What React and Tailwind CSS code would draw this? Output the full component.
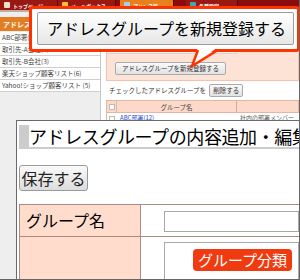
const jp = { fontFamily: '"Noto Sans CJK JP", "Noto Sans", sans-serif' };

const NavTab = ({ label, icon, active }) => (
  <div
    className={`flex items-center gap-[3px] h-[10px] px-[4px] border-r border-[#5a0606] ${
      active ? 'bg-[#e9801e]' : 'bg-[#9a1812]'
    }`}
  >
    <span className={`w-[6px] h-[6px] rounded-[1px] ${icon}`} />
    <span className="text-[5px] leading-none text-white font-bold whitespace-nowrap">{label}</span>
  </div>
);

const SideItem = ({ children }) => (
  <div className="h-[12px] bg-white border-b border-[#cfcfcf] pl-[2px] text-[6.5px] leading-[11px] text-[#444] whitespace-nowrap overflow-hidden">
    {children}
  </div>
);

const SmallBtn = ({ children, className = '' }) => (
  <div
    className={`flex items-center justify-center h-[13px] px-[3px] border border-[#aaa] rounded-[2px] bg-gradient-to-b from-[#fafafa] to-[#e2e2e2] text-[6.5px] text-[#333] whitespace-nowrap ${className}`}
  >
    {children}
  </div>
);

export default function App() {
  return (
    <div
      className="relative w-[300px] h-[280px] overflow-hidden bg-white border-r border-b border-[#666]"
      style={jp}
    >
      {/* background page */}
      <div className="flex h-[10px] bg-[#8b0c0c]">
        <div className="w-[58px]"><NavTab label="トップページ" icon="bg-[#f1e0c8]" /></div>
        <div className="w-[58px]"><NavTab label="メールボックス" icon="bg-[#f5c638]" /></div>
        <div className="w-[54px] ml-[4px]"><NavTab label="アドレス帳" icon="bg-[#9fd0ee]" active /></div>
        <div className="w-[52px] ml-[12px]"><NavTab label="各種設定" icon="bg-[#3aa9b5]" /></div>
      </div>
      <div className="h-[2px] bg-[#c9a6a0]" />

      <div className="flex h-[268px]">
        <div className="w-[101px] pt-[5px] bg-[#eeeeee] border-r border-[#c8c8c8]">
          <div className="h-[14px] bg-[#e47d22] pl-[3px] text-[7px] leading-[14px] font-bold text-white">
            アドレスグループ
          </div>
          <div className="h-[1px]" />
          <SideItem>ABC部署(12)</SideItem>
          <SideItem>取引先-A会社(8)</SideItem>
          <SideItem>取引先-B会社(3)</SideItem>
          <SideItem>楽天ショップ顧客リスト(6)</SideItem>
          <SideItem>Yahoo!ショップ顧客リスト (5)</SideItem>
        </div>

        <div className="flex-1 ml-[5px] pt-[5px]">
          <div className="h-[64px] bg-[#fde3d5] border border-[#f1c3ae]">
            <div className="flex h-[36px]">
              <div className="w-[130px] h-[36px] bg-[#f0f0f0] border-r border-b border-[#d6d6d6] flex items-end justify-center pb-[2px]">
                <span className="text-[6px] text-[#2a4fc8] underline">アドレス帳一覧</span>
              </div>
              <div className="flex-1 flex items-end justify-end pr-[8px] pb-[2px]">
                <span className="text-[6px] text-[#2a4fc8] underline">グループ一覧</span>
              </div>
            </div>
            <div className="pl-[8px] pt-[8px]">
              <SmallBtn className="w-[111px]">アドレスグループを新規登録する</SmallBtn>
            </div>
          </div>

          <div className="flex items-center gap-[3px] h-[19px] pl-[3px]">
            <span className="text-[6.5px] text-[#333]">チェックしたアドレスグループを</span>
            <SmallBtn>削除する</SmallBtn>
          </div>

          <div className="flex h-[13px] bg-[#fcd9c8] border border-[#e3b6a3]">
            <div className="w-[10px] flex items-center justify-center border-r border-[#e3b6a3]">
              <span className="w-[6px] h-[6px] bg-white border border-[#bbb]" />
            </div>
            <div className="w-[120px] border-r border-[#d6a99a] text-center text-[6.5px] leading-[12px] text-[#444]">
              グループ名
            </div>
          </div>
          <div className="flex h-[12px] border-l border-[#e3b6a3]">
            <div className="w-[10px] flex items-center justify-center">
              <span className="w-[6px] h-[6px] bg-white border border-[#bbb]" />
            </div>
            <div className="w-[120px] pl-[3px] text-[6px] leading-[10px] text-[#2a4fc8]">ABC部署(12)</div>
            <div className="pl-[3px] text-[6px] leading-[10px] text-[#555]">社内の部署メンバー</div>
          </div>
        </div>
      </div>

      {/* front panel */}
      <div className="absolute left-[16px] top-[120px] right-0 bottom-0 bg-white border-l border-t border-[#6a6a6a] pl-[2px] pt-[4px]">
        <div className="h-[24px] border-l-[10px] border-b-[2px] border-[#cccccc] bg-white overflow-hidden whitespace-nowrap">
          <span className="text-[18px] leading-[22px] text-black tracking-[-0.4px]">
            アドレスグループの内容追加・編集
          </span>
        </div>

        <div className="mt-[16px] flex items-center justify-center w-[69px] h-[26px] border border-[#9a9a9a] rounded-[3px] bg-gradient-to-b from-[#fbfbfb] to-[#dcdcdc] text-[16px] text-[#222]">
          保存する
        </div>

        <div className="mt-[13px] grid grid-cols-[121px_1fr] border-t border-l border-[#b08a82]">
          <div className="h-[32px] bg-[#ffdccc] border-r border-b border-[#b08a82] pl-[6px] text-[16px] leading-[31px] text-black">
            グループ名
          </div>
          <div className="h-[32px] border-b border-[#b08a82] pl-[23px] pt-[6px]">
            <div className="h-[21px] border border-[#a8a8a8]" />
          </div>
          <div className="h-[60px] bg-[#ffdccc] border-r border-[#b08a82]" />
          <div className="pl-[23px] pt-[5px]">
            <div className="h-[60px] border border-[#a8a8a8] pl-[28px] pt-[6px]">
              <div className="flex items-center justify-center w-[99px] h-[22px] rounded-[4px] bg-[#f03a10] text-[15px] text-white">
                グループ分類
              </div>
            </div>
          </div>
        </div>
      </div>

      {/* callout */}
      <div className="absolute left-[29px] top-[6px] w-[271px] h-[46px] border-[3px] border-[#ff3300] rounded-[4px] bg-white pt-[3px] pl-[5px] pr-[3px] pb-[4px]">
        <div className="h-[33px] border border-[#9c9c9c] rounded-[2px] bg-gradient-to-b from-[#ffffff] to-[#e6e6e6] pl-[9px] text-[16px] leading-[31px] text-black whitespace-nowrap">
          アドレスグループを新規登録する
        </div>
      </div>
      <svg className="absolute left-0 top-0 pointer-events-none" width="300" height="80">
        <polygon points="198,47 192,66 218,47" fill="#ffffff" />
        <path d="M198 50 L192 66 L218 50" fill="none" stroke="#ff3300" strokeWidth="2.5" strokeLinejoin="miter" />
      </svg>
    </div>
  );
}
